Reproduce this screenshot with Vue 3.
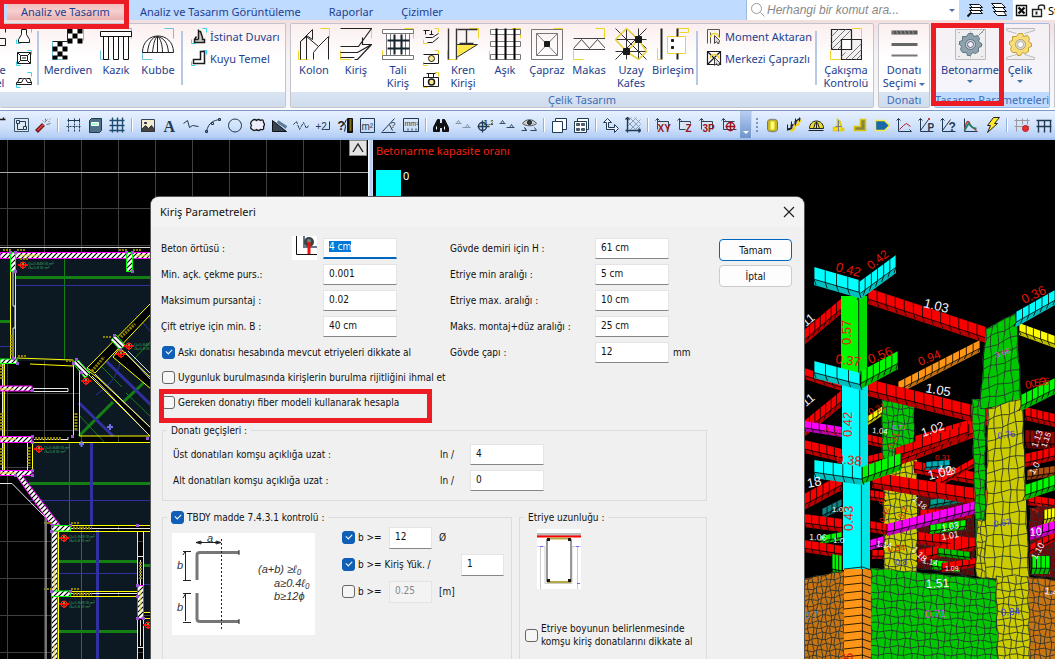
<script setup>
import { h, onMounted } from 'vue'

const K = '#1b1b1b', Y = '#f0d428', C = '#35d5ec', N = '#1f3a52', R = '#c01818'
const cy = ['M0 11V15H4M11 0H15V4', C]
const ye = ['M0 11V15H4M11 0H15V4', Y]
const cyB = ['M0 22V31H10M22 0H31V10', '#6cc4dc']
const yeB = ['M0 22V31H10M22 0H31V10', Y]

/* Each entry is [path, stroke, fill, strokeWidth] or { t, x, y, s, c } for lettering */
const ICONS = {
  cut: [['M-8 10H5V17H-8M5 0V4', K]],
  foot: [cy, ['M5 1H10V6L13 11V14H2V11L5 6Z', K, '#fff']],
  pad: [cy, ['M1 2H14V13H1ZM4 5H11V10H4ZM1 2L4 5M14 2L11 5M1 13L4 10M14 13L11 10M5.500 7.500H9.500', K]],
  tie: [cy, ['M0 10H5L7 6H9L11 10H15V12H0ZM2 6H6M10 6H14M3 6L1 10M13 6L15 10', K]],
  stairs: [['M0 13V31H10M20 0H31V12', '#6cc4dc'], ['M0.500 13.500H15.500V0.500H30.500V14.500H25.500L14.500 25.500V30.500H0.500Z', 'none', '#fff'], ['M15 0H20V5H15ZM25 0H30V5H25ZM20 5H25V10H20ZM15 10H20V15H15ZM25 10H30V15H25ZM5 13H10V18H5ZM0 18H5V23H0ZM10 18H15V23H10ZM5 23H10V28H5ZM0 27H5V31H0ZM10 27H15V31H10Z', 'none', '#000'], ['M0 13H15M15 13V0', '#222']],
  piles: [cyB, ['M0 3H31V8H0ZM3 8H8V31H3ZM13 8H18V31H13ZM23 8H28V31H23Z', '#111', '#fff', 1]],
  dome: [cyB, ['M0 24C0 2 31 2 31 24ZM5 24C6 14 9 9 15 8M10 24C11 16 12 10 15 8V24M20 24C20 16 18 10 15 8M26 24C25 14 22 10 15 8', '#222', '#fff']],
  wall: [cy, ['M7 1V11M7 3H9L11 9V11H13V14H3V11H7M5 8L3 11', K, '#ccc', 1.5]],
  well: [cy, ['M9 1H13V13H2V9H9Z', K, '#fff', 1.5]],
  column: [yeB, ['M2 31V13L14 1V11L8 7V31M2 13L8 8L20 18L30 8V31M20 18L15 24V31', '#222', 'none', 1]],
  beam: [yeB, ['M0 0H31L18 18H0M0 24H17L31 16H22V9M31 16L17 31H14M0 29H14', '#222', 'none', 1.2]],
  sub: [yeB, ['M0 1H31V5H0ZM0 27H31V31H0ZM4 5H8V27H4ZM23 5H27V27H23Z', '#777', '#fff'], ['M12 6V26M19 6V26M5 12H27M5 20H27', '#13242e', 'none', 2]],
  s1: [ye, ['M0 2H6M2 2V6M6 6H10M8 2V6M15 5L9 9H2M15 9L9 14H4', K]],
  s2: [ye, ['M0 4H15V13H0', K], ['M5 8A3 3 0 1 0 11 8A3 3 0 1 0 5 8', K, '#fbe98c']],
  s3: [ye, ['M0 5H15V14H0ZM3 1H12M5 1V5M10 1V5', K], ['M5 9.500A3 3 0 1 0 11 9.500A3 3 0 1 0 5 9.500', K, '#fbe98c', 1.5]],
  crane: [yeB, ['M1 0V31M9 0V31M10 1H30M19 1V15M12 15H26', '#333', 'none', 1.4], ['M9 16H30L9 29Z', '#333', '#ffe94d']],
  purlin: [yeB, ['M1 1H31V6H1ZM1 13H31V18H1ZM1 26H31V31H1Z', '#777', '#fff'], ['M7 0V31M16 0V31M25 0V31', '#000', 'none', 2]],
  brace: [yeB, ['M0 1H31V31H0ZM5 5H26V27H5ZM5 5L26 27M26 5L5 27', '#777'], ['M13 13H18V18H13Z', K, K]],
  truss: [yeB, ['M0 10H32M0 21H32M0 20L8 11L16 20L24 11L32 20', '#444', 'none', 1]],
  space: [['M11 0L31 20M31 0L0 31M0 0L31 31M11 0V31M23 0V31M0 11H31M0 23H31', '#333'], ['M0 11L11 0L23 11L11 23ZM23 11L31 23L23 31L11 23', '#e8d240', 'none', 1.6], ['M20 8H26V14H20ZM8 20H14V26H8Z', K, K]],
  joint: [['M4 0V31', '#222', 'none', 2], ['M0 20V31H3M20 31V24M22 4H31V0H20', Y, 'none', 1], ['M10 8H28V25H10Z', Y, '#fff'], ['M14 11H16V13H14ZM14 18H16V20H14Z', K, K], ['M20 0V8M20 25V31', '#222', 'none', 2]],
  moment: [['M1 15V1H13V9M4 15V4', '#555'], ['M4 9A4 4 0 0 1 12 9', Y, 'none', 1.6], ['M8 7V15L10 13L12 16L13 12Z', '#444', '#ddd']],
  central: [['M1 1H14V14H1ZM1 1L14 14M14 1L1 14', K, '#fff', 1.2], ['M4 8A4 4 0 0 1 12 8', Y, 'none', 1.6], ['M8 7V15L10 13L12 16L13 12Z', '#444', '#ddd']],
  clash: [yeB, ['M1 1H21V21H1ZM11 11H31V31H11Z', '#222', '#f2f0f0', 1.2], ['M1 8L8 1M1 15L15 1M1 21L21 1M7 21L11 17M15 31L31 15M11 28L15 24M21 31L31 21M11 21L16 16M26 31L31 26', '#777'], ['M11 11H21V21H11Z', '#222', '#fff', 1.2]],
  rebar: [['M3 4H29', '#555', 'none', 4], ['M3 16H29', '#666', 'none', 3], ['M3 27H29', '#777', 'none', 2], ['M4 2L5 6M8 2L9 6M12 2L13 6M16 2L17 6M20 2L21 6M24 2L25 6', '#999']],
  gear: [['M1 1H31V31H1Z', '#bbb', '#eee'], ['M4 4H5M27 4H28M4 28H5M27 28H28M4 16H5M27 16H28M16 4V3M16 28V29M24 7L30 1', '#888'], ['M14 5H18L19 8L23 7L25 10L24 13L27 15V18L24 19L24 23L21 25L18 24L16 27H13L12 24L8 24L6 21L7 18L5 16V13L8 12L8 8L12 8Z', '#5f7480', '#8ea2ad'], ['M11 16A5 5 0 1 0 21 16A5 5 0 1 0 11 16', '#5f7480', '#c9d2d8'], ['M13 16A3 3 0 1 0 19 16A3 3 0 1 0 13 16', '#667', '#eef']],
  gearY: [['M2 0H30V2L20 5M2 2L12 5M2 0V2M2 31H30V29L20 26M2 29L12 26M2 31V29', '#bbb', '#eee'], ['M14 5H18L19 8L23 7L25 10L24 13L27 15V18L24 19L24 23L21 25L18 24L16 27H13L12 24L8 24L6 21L7 18L5 16V13L8 12L8 8L12 8Z', '#c0a030', '#f8dc78'], ['M11 16A5 5 0 1 0 21 16A5 5 0 1 0 11 16', '#b0a070', '#e4e0d0'], ['M13 16A3 3 0 1 0 19 16A3 3 0 1 0 13 16', '#aaa', '#fff']],

  edge: [['M8 2H14M12 2V0', K, 'none', 1.5]],
  frame: [['M1 1H15V14H1Z', '#3c5468', '#dce8f4'], ['M3 3H6V6H3ZM10 9H13V12H10ZM4 6V12H10M6 4H12V9', N]],
  wand: [['M1 14L8 7', '#7a1010', 'none', 4], ['M2 13L8 7', '#e05050', 'none', 1.5], ['M9 5L12 2M11 7L15 6M10 1V3M14 2L15 1M13 4H14M7 3L8 4', '#777']],
  dim: [['M2 3H14M3 1V5M9 1V5M14 1V5', N], ['M1 9H15M3 6V15M9 6V15M14 6V15', N, 'none', 1, '2 1']],
  book: [['M2 3L4 1H14V13L12 15H2Z', N, '#4f7288'], ['M4 5H11V8H4Z', '#fff', '#9fc']],
  grid: [['M0 3H15M0 8H15M0 13H15M3 0V15M8 0V15M13 0V15', '#1f4c70', 'none', 1.4]],
  image: [['M2 2H15V14H2Z', '#345', '#f4ecd0'], ['M2 12L6 8L9 11L12 8L15 12V14H2Z', '#333', '#444'], ['M5 5H7V6H5Z', '#234', '#234']],
  letter: [{ t: 'A', x: 2, y: 14, s: 16, c: N, f: 'Liberation Serif', b: 1 }],
  poly: [['M0 6L4 3L6 10L9 8L15 9', N]],
  arc: [['M1 14C3 5 8 3 14 2M0 13H2V15H0ZM6 5H8V7H6ZM13 1H15V3H13Z', N]],
  circle: [['M1 8A6.500 6.500 0 1 0 14 8A6.500 6.500 0 1 0 1 8', N]],
  cloud: [['M3 3Q5 1 7 3Q9 1 11 3Q14 1 14 5Q16 7 14 9Q15 13 11 12Q9 14 7 12Q4 14 3 12Q0 11 2 8Q0 5 3 3Z', K, '#eef', 1.3]],
  wedge: [['M1 3L15 14H1Z', '#111', '#345'], ['M6 4L15 10', '#5b7c94', 'none', 3]],
  zigzag: [['M0 7L3 4L6 12L10 5L13 11L15 8', N, 'none', 1, '3 1']],
  elev: [{ t: '+2', x: 0, y: 12, s: 10, c: N }, ['M10 12H14V4', N]],
  query: [{ t: '?', x: 0, y: 12, s: 12, c: K, b: 1 }, ['M9 2L7 6L8 9L7 14', K], ['M10 1H15V15H10Z', '#111', '#111'], ['M13 2V14', Y, 'none', 2, '1 1']],
  area: [['M1 1H15V15H1Z', N], { t: 'm²', x: 2, y: 12, s: 10, c: N }],
  angle: [['M0 15H14M1 14L13 1M8 7L11 13', N], { t: '?', x: 9, y: 10, s: 9, c: N }],
  mm: [['M0 1H15V14H0Z', N], { t: 'mm²', x: 1, y: 8, s: 7, c: N }, ['M4 12H5M8 12H9M12 12H13', N, 'none', 2]],
  find: [['M4 2H6V6H9V2H11L15 10V14H9V10H6V14H0V10Z', '#111', '#111'], ['M3 9V12M11 9V12', '#fff']],
  lv1: [['M0 6H6M3 3L5 6H1ZM7 10H15M12 7L14 10H10Z', '#8496a6']],
  axis: [['M1 9A4 4 0 1 0 9 9A4 4 0 1 0 1 9M5 3V15M0 9H12', N, 'none', 1.4], { t: '1.2', x: 6, y: 7, s: 8, c: N, b: 1 }],
  lv2: [['M0 6H6M3 3L5 6H1ZM7 10H15M12 7L14 10H10Z', '#334f66']],
  eye: [['M1 6C4 1 12 1 15 6C12 9 4 9 1 6Z', '#555', '#ccc'], ['M6 5A2 2 0 1 0 10 5A2 2 0 1 0 6 5', '#111', '#345'], ['M0 13H5M3 10L5 13ZM9 13H15M13 10L15 13', '#345']],
  copy: [['M4 1H15V12H4Z', N, '#fff'], ['M1 4H11V15H1Z', N, '#fff']],
  tiles: [['M4 1H15V12H4Z', N, '#fff'], ['M1 4H13V15H1Z', N, '#fff'], ['M3 6H6V8H3ZM8 6H11V8H8ZM3 11H6V13H3ZM8 11H11V13H8Z', '#456', '#567']],
  move: [['M4 1L8 5H5V10H11V7L15 11L11 15V12H3V5H0Z', N, '#eef']],
  hatch: [['M2 4L6 0M2 9L11 0M5 12L15 2M10 12L15 7M4 0L15 11M9 0L15 6M2 4L10 12', '#8aa0b4'], ['M2 0V15M0 13H15M0 2L2 0L4 2M13 11L15 13L13 15', N, 'none', 1.4]],
  xy: [['M2 1V12M0 3L2 1L4 3M2 4H13V12', '#345', '#d8e4f0'], { t: 'XY', x: 2, y: 14, s: 10, c: '#9c1420', b: 1 }],
  z: [['M2 1V12H8M0 3L2 1L4 3M2 4H13V6', '#345', '#d8e4f0'], { t: 'Z', x: 8, y: 14, s: 10, c: '#9c1420', b: 1 }],
  p3: [['M2 1V12M0 3L2 1L4 3M2 4H13V12', '#345', '#d8e4f0'], { t: '3P', x: 3, y: 14, s: 10, c: '#9c1420', b: 1 }],
  orbit: [['M2 1V12H15M0 3L2 1L4 3M2 4H13', '#345'], ['M5 9A4 4 0 1 0 13 9A4 4 0 1 0 5 9M9 4V14M4 9H14', '#9c1420', 'none', 1.4]],
  cyl: [['M3 4C3 1 13 1 13 4V12C13 15 3 15 3 12Z', '#777', '#c8b820'], ['M6 4H10V12H6Z', 'none', '#ffff70']],
  ladder: [['M1 12L5 11V8L9 7V4L14 1', '#222', 'none', 2], ['M4 14L8 11V8L12 7V4L15 3', Y, 'none', 2.4], ['M1 7V13M5 4V10M9 1V8M13 0V4', '#222']],
  dome2: [['M1 11C1 1 15 1 15 11Z', '#222', '#e8dc30'], ['M5 11L7 5M8 11V4M11 11L9 5M0 13H15', '#222']],
  stand: [['M7 1V11M7 3H9L11 9V11H13V13H3V10H7', '#e0cc00', '#ffe640', 1.6], ['M8 3V14M5 9H11', '#777']],
  boot: [['M8 2H13V13H2V9H8Z', '#d8c810', '#8a8440', 1.6]],
  tag: [['M1 3H10L15 8L10 13H1Z', '#fbe840', '#1769a8', 1.4]],
  chart1: [['M2 1V14H15M0 3L2 1L4 3M13 12L15 14', N], ['M3 12L7 8L10 6L14 9', R]],
  chart2: [['M2 1V14H15M0 3L2 1L4 3M2 13L10 2', N], ['M10 1H11V2H10Z', R, R], { t: 'P', x: 9, y: 13, s: 10, c: N, b: 1 }],
  chart3: [['M2 1V14H15M0 3L2 1L4 3M2 13L10 2', N], { t: '?', x: 8, y: 13, s: 12, c: N, b: 1 }],
  spectrum: [['M2 1V14H15', N], ['M2 13C4 2 6 2 8 8L14 13', '#c03030', 'none', 1.5], ['M2 13L6 6L10 10L14 11', '#1c8a70', 'none', 1.8]],
  bolt: [['M9 0H15L10 6H13L3 15L6 8H3Z', '#222', '#ffe828']],
  frameR: [['M0 3H15M0 9H15M2 1V14M8 1V7M13 1V7', '#999'], ['M8 11A3 3 0 1 0 14 11A3 3 0 1 0 8 11', R, '#e03030']],
  frameB: [['M0 3H15M0 9H15M2 3V15M8 3V15M14 3V15', N, 'none', 1.4]],

  layersUp: [['M2 8L5 11H15L12 8ZM2 5L5 8H15L12 5ZM2 2L5 5H15L12 2Z', '#111', '#fff', 1], ['M0 14L4 10', '#111', 'none', 2]],
  layersDn: [['M2 9L6 13H15L12 9ZM1 5L5 9H15L11 5ZM0 1L4 5H14L10 1Z', '#111', '#fff', 1]],
  xbox: [['M1 2H11V12H1Z', '#111', '#fff', 1.4], ['M3 4L9 10M9 4L3 10', '#111', 'none', 2.4]],
  lock: [['M1 6H10V13H1ZM7 6V3C7 1 13 1 13 3V6', '#222', '#fff', 1.4], ['M5 8V11', '#222', 'none', 2]],
  lens: [['M2 6A5 5 0 1 0 12 6A5 5 0 1 0 2 6M11 10L15 14', '#9a9a9a']],
}

const Glyph = (p) =>
  h('svg', { class: 'glyph', width: p.size, height: p.size, viewBox: `-0.5 -0.5 ${p.size} ${p.size}`, 'aria-hidden': 'true' },
    ICONS[p.name].map((s) =>
      Array.isArray(s)
        ? h('path', { d: s[0], stroke: s[1] || 'none', fill: s[2] || 'none', 'stroke-width': s[3] || 1, 'stroke-dasharray': s[4] })
        : h('text', { x: s.x, y: s.y, 'font-size': s.s, fill: s.c, 'font-weight': s.b ? 700 : 400, 'font-family': (s.f || 'Liberation Sans') + ', sans-serif' }, s.t)))
Glyph.props = ['name', 'size']

const tabs = ['Analiz ve Tasarım', 'Analiz ve Tasarım Görüntüleme', 'Raporlar', 'Çizimler']
const steelA = [['column', 'Kolon'], ['beam', 'Kiriş'], ['sub', 'Tali Kiriş']]
const steelB = [['crane', 'Kren Kirişi'], ['purlin', 'Aşık'], ['brace', 'Çapraz'], ['truss', 'Makas'], ['space', 'Uzay Kafes'], ['joint', 'Birleşim']]
const tools = 'edge frame wand | dim book grid | image letter poly arc circle cloud wedge zigzag elev query area angle mm | find lv1 axis lv2 eye | copy tiles | move hatch | xy z p3 orbit'.split(' ')
const tools2 = 'cyl ladder dome2 stand boot tag chart1 chart2 chart3 spectrum bolt | frameR frameB'.split(' ')

const leftFields = [['cover', 'Beton örtüsü :', '4 cm'], ['pull', 'Min. açk. çekme purs.:', '0.001'], ['maxp', 'Maksimum pursantaj :', '0.02'], ['minb', 'Çift etriye için min. B :', '40 cm']]
const rightFields = [['webh', 'Gövde demiri için H :', '61 cm'], ['smin', 'Etriye min aralığı :', '5 cm'], ['smax', 'Etriye max. aralığı :', '10 cm'], ['mont', 'Maks. montaj+düz aralığı :', '25 cm'], ['webd', 'Gövde çapı :', '12', 'mm']]
const checks = [['Askı donatısı hesabında mevcut etriyeleri dikkate al', true], ['Uygunluk burulmasında kirişlerin burulma rijitliğini ihmal et', false], ['Gereken donatıyı fiber modeli kullanarak hesapla', false]]

/* ---------- plan view ---------- */
const vGrid = Array.from({ length: 10 }, (_, i) => 7.5 + i * 37)
const hGrid = Array.from({ length: 13 }, (_, i) => 208.5 + i * 37)
const marks = [[23, 265], [129, 346], [39, 449], [64, 538], [64, 604], [148, 625], [121, 354], [86, 381]]
const nodes = [[10, 252], [15, 252], [15, 271], [126, 252], [132, 252], [132, 271], [13, 358], [17, 363], [73, 363], [76, 359], [32, 390], [81, 372], [114, 335], [120, 349], [32, 436], [32, 442], [32, 470], [32, 475], [15, 475], [52, 525], [70, 525], [51, 531], [137, 525], [70, 591], [51, 591], [137, 585], [137, 596], [137, 618], [143, 618], [147, 438], [72, 436]]
const blurs = [[3, 250], [17, 250], [119, 250], [133, 250], [20, 259], [18, 356], [66, 361], [103, 337], [44, 523], [71, 523], [44, 589], [71, 589]]

/* ---------- 3D view ---------- */
const P = (a) => a.map((p) => p.map((v) => Math.round(v * 10) / 10).join(',')).join(' ')
const mix = (a, b, t) => [a[0] + (b[0] - a[0]) * t, a[1] + (b[1] - a[1]) * t]
function beam(x1, y1, x2, y2, d, n, c) {
  let lines = ''
  const lean = y2 > y1 ? 2 : -2
  for (let i = 0; i <= n; i++) {
    const [x, y] = mix([x1, y1], [x2, y2], i / n)
    lines += `M${x} ${y}V${y + d * 0.68}L${x + lean} ${y + d}`
  }
  lines += `M${x1} ${y1 + d * 0.68}L${x2} ${y2 + d * 0.68}`
  return { c, pts: P([[x1, y1], [x2, y2], [x2, y2 + d], [x1, y1 + d]]), shade: P([[x1, y1 + d * 0.68], [x2, y2 + d * 0.68], [x2, y2 + d], [x1, y1 + d]]), lines, o: 0.25, s: 'rgba(0,0,0,.8)' }
}
function mesh(a, b, c2, d, nx, ny, c) {
  let lines = ''
  const wob = (i, j) => Math.sin(i * 2.3 + j * 1.7) * 1.2
  for (let i = 0; i <= nx; i++) for (let j = 0; j < ny; j++) {
    const p = mix(mix(a, b, i / nx), mix(d, c2, i / nx), j / ny), q = mix(mix(a, b, i / nx), mix(d, c2, i / nx), (j + 1) / ny)
    lines += `M${p[0] + wob(i, j)} ${p[1]}L${q[0] + wob(i, j + 1)} ${q[1]}`
  }
  for (let j = 0; j <= ny; j++) for (let i = 0; i < nx; i++) {
    const p = mix(mix(a, d, j / ny), mix(b, c2, j / ny), i / nx), q = mix(mix(a, d, j / ny), mix(b, c2, j / ny), (i + 1) / nx)
    lines += `M${p[0]} ${p[1] + wob(j, i)}L${q[0]} ${q[1] + wob(j, i + 1)}`
  }
  return { c, pts: P([a, b, c2, d]), shade: '', lines, o: 0, s: 'rgba(40,50,50,.85)' }
}
function column(x1, x2, y1, y2, c, n = 0) {
  const m = x1 + (x2 - x1) * 0.68
  let lines = `M${m} ${y1}V${y2}`
  for (let i = 0; i < n; i++) lines += `M${x1} ${y1 + i * 8}L${m} ${y1 + i * 8 - 2}L${x2} ${y1 + i * 8 + 1}`
  return { c, pts: P([[x1, y1], [x2, y1], [x2, y2], [x1, y2]]), shade: P([[m, y1], [x2, y1], [x2, y2], [m, y2]]), lines, o: 0.1, s: 'rgba(0,0,0,.8)' }
}
const RD = '#f80000', CY = '#00ffff', GR = '#00f800', DG = '#00c800', YE = '#cccc00', MG = '#ff00ff', OR = '#ff9618', BR = '#c87410', YB = '#ffff00'
const solids = [
  beam(804, 330, 842, 298, 15, 7, RD), beam(804, 368, 842, 380, 11, 4, RD), beam(804, 421, 842, 390, 16, 7, RD),
  beam(804, 421, 842, 427, 10, 5, MG), beam(804, 440, 842, 449, 13, 5, RD), beam(804, 494, 842, 474, 16, 6, RD),
  beam(822, 509, 842, 499, 10, 4, '#108080'), beam(804, 514, 842, 519, 13, 5, RD), beam(820, 536, 842, 532, 8, 4, GR), beam(804, 540, 842, 546, 12, 5, RD),
  beam(832, 554, 842, 556, 22, 3, GR),
  beam(866, 434, 884, 438, 10, 3, RD), beam(868, 416, 883, 406, 9, 3, YB), beam(868, 456, 884, 452, 10, 3, RD),
  mesh([882, 400], [914, 402], [914, 560], [884, 560], 6, 22, DG),
  mesh([884, 460], [917, 460], [917, 574], [884, 572], 6, 17, YE),
  mesh([918, 487], [974, 487], [974, 576], [918, 568], 9, 14, '#5a0a08'),
  beam(915, 436, 975, 418, 9, 8, RD), beam(914, 461, 974, 472, 12, 7, RD), beam(926, 462, 950, 460, 8, 4, '#00aeb8'), beam(935, 480, 974, 458, 9, 6, RD),
  beam(930, 500, 974, 492, 8, 6, '#00a090'), beam(918, 532, 976, 538, 12, 8, RD), beam(930, 525, 966, 520, 9, 6, GR), beam(918, 550, 976, 538, 12, 8, RD),
  beam(932, 560, 960, 563, 9, 5, GR), beam(942, 563, 976, 558, 9, 5, RD), beam(920, 510, 974, 508, 10, 7, RD), beam(938, 548, 970, 552, 8, 5, DG),
  beam(870, 490, 884, 492, 10, 3, RD), beam(870, 521, 888, 524, 11, 3, RD), beam(870, 540, 884, 536, 10, 2, MG), beam(872, 550, 884, 550, 9, 2, RD),
  beam(898, 382, 980, 340, 12, 12, OR),
  beam(868, 288, 986, 327, 16, 13, RD),
  beam(900, 450, 986, 418, 15, 10, RD),
  beam(868, 379, 989, 409, 17, 13, RD),
  beam(895, 448, 968, 424, 12, 8, RD), beam(872, 472, 992, 491, 16, 13, RD),
  beam(887, 524, 985, 499, 12, 13, MG),
  mesh([972, 399], [985, 399], [985, 576], [977, 576], 2, 22, DG),
  mesh([977, 520], [986, 520], [986, 579], [976, 576], 2, 8, YE),
  mesh([986, 329], [1016, 313], [1021, 402], [980, 409], 5, 8, DG),
  beam(1019, 323, 1055, 336, 12, 5, YB), beam(1025, 407, 1055, 414, 13, 5, RD), beam(1025, 430, 1055, 432, 18, 6, '#8c0606'),
  beam(1025, 454, 1055, 447, 13, 5, RD), beam(1027, 470, 1055, 466, 10, 5, '#b05010'), beam(1028, 495, 1055, 499, 10, 4, RD),
  mesh([1030, 508], [1055, 506], [1055, 578], [1030, 575], 6, 10, '#6e0a0a'), beam(1044, 510, 1055, 508, 14, 3, YB),
  beam(1030, 545, 1055, 532, 9, 4, RD), beam(1032, 556, 1050, 556, 18, 4, GR),
  mesh([988, 409], [1022, 398], [1029, 580], [985, 578], 5, 16, YE),
  beam(1030, 528, 1055, 521, 12, 4, MG), beam(1025, 485, 1055, 475, 15, 5, GR), beam(1021, 395, 1055, 378, 16, 6, GR), beam(1016, 312, 1055, 290, 15, 6, CY),
  mesh([804, 579], [844, 571], [844, 662], [804, 662], 9, 15, BR),
  mesh([871, 568], [996, 580], [998, 662], [871, 662], 19, 12, DG),
  mesh([1027, 577], [1056, 580], [1056, 662], [1030, 662], 5, 13, BR),
  mesh([996, 576], [1028, 576], [1030, 662], [998, 662], 5, 12, YE),
  column(841, 867, 296, 375, GR), column(842, 868, 385, 480, CY), column(843, 870, 478, 570, CY), column(844, 871, 569, 662, OR, 12),
  beam(859, 282, 896, 255, 18, 6, CY), beam(814, 267, 859, 280, 18, 4, CY),
  beam(861, 371, 898, 351, 18, 6, GR), beam(814, 361, 860, 373, 17, 4, CY),
  beam(862, 467, 901, 453, 17, 6, GR), beam(814, 460, 862, 467, 18, 5, CY),
]
const labels = [
  ['0.42', 835, 271, 14, 'r', 13], ['0.42', 871, 270, -38, 'r', 12], ['1.03', 923, 307, 14, 'w', 13], ['0.36', 1024, 304, -25, 'r', 13], ['11', 806, 327, -40, 'w', 12],
  ['0.57', 851, 345, -90, 'r', 13], ['0.37', 835, 363, 8, 'r', 13], ['0.56', 870, 364, -22, 'r', 13], ['0.94', 920, 366, -22, 'r', 12], ['1.05', 925, 392, 10, 'w', 13],
  ['11', 806, 407, -40, 'w', 12], ['0.42', 852, 437, -90, 'r', 13], ['1.02', 923, 437, -20, 'w', 12], ['0.31', 870, 415, -22, 'r', 9], ['1.04', 872, 433, 5, 'w', 8],
  ['0.38', 836, 463, 6, 'r', 13], ['1.02', 929, 480, -14, 'w', 13], ['18', 808, 488, -12, 'w', 13], ['0.43', 853, 531, -90, 'r', 13], ['1.06', 809, 540, 2, 'w', 9],
  ['1.51', 926, 588, -3, 'w', 12], ['0.71', 925, 618, -3, 'm', 11], ['0.84', 1001, 616, -5, 'b', 10], ['0.67', 994, 527, -8, 'b', 9], ['0.76', 998, 439, -8, 'b', 9],
  ['3.66', 996, 358, -20, 'm', 8], ['0.71', 892, 430, 0, 'm', 7], ['0.53', 1026, 389, -12, 'r', 11], ['0.56', 1031, 387, -8, 'r', 10], ['1.13', 1037, 448, -70, 'w', 9],
  ['10', 1030, 536, -4, 'w', 11], ['1.0', 1034, 475, -60, 'w', 9], ['1.03', 942, 531, -10, 'w', 9], ['1.01', 942, 540, -10, 'w', 9], ['0.34', 888, 552, -5, 'r', 9], ['0.8', 895, 565, 0, 'b', 9],
  ['1.18', 912, 500, 40, 'w', 8], ['0.31', 935, 460, 0, 'r', 8], ['1.4', 1044, 594, 8, 'w', 10], ['0.7', 805, 619, -4, 'l', 10], ['1.10', 1036, 560, -60, 'w', 9], ['0.15', 853, 678, -90, 'r', 13],
  ['1.14', 876, 546, 10, 'w', 8], ['1.18', 911, 550, 45, 'w', 9], ['0.42', 884, 523, -70, 'r', 8], ['0.7', 903, 520, -60, 'r', 9], ['1.14', 922, 563, 10, 'w', 8], ['1.09', 945, 571, 0, 'w', 7], ['0.20', 824, 433, 10, 'r', 9], ['1.03', 1036, 514, -60, 'r', 9], ['0.31', 893, 450, -70, 'r', 9],
  ['1.0', 832, 512, 0, 'w', 8], ['1.0', 833, 543, 0, 'w', 8], ['1.08', 938, 471, 10, 'w', 9], ['0.4', 884, 505, -80, 'r', 8], ['1.15', 1046, 448, -70, 'w', 8],
]
const tint = { r: '#e01808', w: '#f4f4ff', m: '#e850e8', b: '#3838f0', l: '#4a90d8' }

onMounted(() => {
  const el = document.getElementById('cover')
  if (el) { el.focus(); el.select() }
})
</script>

<template>
  <div class="app">
    <header class="tabbar">
      <nav class="tabs">
        <button v-for="(t, i) in tabs" :key="t" class="tab" :class="{ active: i === 0 }">{{ t }}</button>
      </nav>
      <div class="search">
        <Glyph name="lens" :size="16" />
        <input type="search" aria-label="Komut ara" placeholder="Herhangi bir komut ara..." />
        <i class="drop"></i>
      </div>
      <div class="layers"><button aria-label="Katman yukarı"><Glyph name="layersUp" :size="16" /></button><button aria-label="Katman aşağı"><Glyph name="layersDn" :size="16" /></button></div>
      <div class="state"><Glyph name="xbox" :size="14" /><Glyph name="lock" :size="15" /><span>St</span></div>
    </header>

    <section class="ribbon">
      <div class="group g1">
        <div class="items">
          <button class="big clipped"><Glyph name="cut" :size="32" /><span>ve<br />el</span></button>
          <div class="stack"><button v-for="n in ['foot', 'pad', 'tie']" :key="n" :aria-label="n"><Glyph :name="n" :size="16" /></button></div>
          <i class="sep"></i>
          <button class="big wide"><Glyph name="stairs" :size="32" /><span>Merdiven</span></button>
          <button class="big"><Glyph name="piles" :size="32" /><span>Kazık</span></button>
          <button class="big"><Glyph name="dome" :size="32" /><span>Kubbe</span></button>
          <i class="sep"></i>
          <div class="list">
            <button><Glyph name="wall" :size="16" />İstinat Duvarı</button>
            <button><Glyph name="well" :size="16" />Kuyu Temel</button>
          </div>
        </div>
        <div class="caption"></div>
      </div>
      <div class="group g2">
        <div class="items">
          <button v-for="b in steelA" :key="b[0]" class="big"><Glyph :name="b[0]" :size="32" /><span>{{ b[1] }}</span></button>
          <div class="stack"><button v-for="n in ['s1', 's2', 's3']" :key="n" :aria-label="n"><Glyph :name="n" :size="16" /></button></div>
          <button v-for="b in steelB" :key="b[0]" class="big"><Glyph :name="b[0]" :size="32" /><span>{{ b[1] }}</span></button>
          <i class="sep"></i>
          <div class="list">
            <button><Glyph name="moment" :size="16" />Moment Aktaran</button>
            <button><Glyph name="central" :size="16" />Merkezi Çaprazlı</button>
          </div>
          <i class="sep"></i>
          <button class="big wide"><Glyph name="clash" :size="32" /><span>Çakışma Kontrolü</span></button>
        </div>
        <div class="caption">Çelik Tasarım</div>
      </div>
      <div class="group g3">
        <div class="items"><button class="big"><Glyph name="rebar" :size="32" /><span>Donatı Seçimi <i class="drop"></i></span></button></div>
        <div class="caption">Donatı</div>
      </div>
      <div class="group g4">
        <div class="items">
          <button class="big wider"><Glyph name="gear" :size="32" /><span>Betonarme</span><i class="drop"></i></button>
          <button class="big narrow"><Glyph name="gearY" :size="32" /><span>Çelik</span><i class="drop"></i></button>
        </div>
        <div class="caption blue">Tasarım Parametreleri</div>
      </div>
      <div class="group g5"><div class="items"></div><div class="caption"></div></div>
    </section>

    <section class="toolbar">
      <div class="strip first">
        <template v-for="(n, i) in tools" :key="i">
          <i v-if="n === '|'" class="tsep"></i>
          <button v-else :aria-label="n"><Glyph :name="n" :size="16" /></button>
        </template>
      </div>
      <button class="overflow" aria-label="Diğer düğmeler"><i class="drop"></i></button>
      <div class="strip second">
        <i class="grip"></i>
        <template v-for="(n, i) in tools2" :key="i">
          <i v-if="n === '|'" class="tsep"></i>
          <button v-else :aria-label="n"><Glyph :name="n" :size="16" /></button>
        </template>
      </div>
    </section>

    <main class="work">
      <div class="plan">
        <svg class="scene" aria-label="Kat planı">
          <defs>
            <pattern id="hatch" width="5" height="5" patternUnits="userSpaceOnUse"><path d="M0 0H5V5H0Z" fill="#fff" /><path d="M-1 6L6 -1M-1 1L1 -1M4 6L6 4" stroke="#000" stroke-width="1.200" /></pattern>
            <pattern id="hatchBack" width="5" height="5" patternUnits="userSpaceOnUse"><path d="M0 0H5V5H0Z" fill="#fff" /><path d="M-1 -1L6 6M4 -1L6 1M-1 4L1 6" stroke="#000" stroke-width="1.200" /></pattern>
          </defs>
          <g transform="translate(0 -140)">
            <path v-for="x in vGrid" :key="'v' + x" :d="`M${x} 140V660`" stroke="#404040" />
            <path v-for="y in hGrid" :key="'h' + y" :d="`M0 ${y}H368`" stroke="#404040" />
            <path d="M0 172.500H368" stroke="#aaa" />
            <path d="M0 247.500H151" stroke="#ddd" />
            <path d="M0 258H151V436H79V361H0ZM33 443H151V525H58L19 475H33ZM58 532H137V591H58ZM58 597H137V660H58ZM144 532H151V612H144ZM144 620H151V660H144Z" fill="#0c1923" />
            <path d="M0 364H73V436H0Z" fill="#000" />
            <path d="M7.500 364V436M44.500 364V436M0 393.500H73M0 430.500H73" stroke="#404040" />
            <path d="M16 277.500H151M0 321.500H10M29 483.500H151M58 561.500H137M58 631.500H137M144 565.500H151M79 436L113 402M120 405L151 376" stroke="#148014" stroke-width="3" />
            <path d="M64.500 258V359M69.500 443V525M81.500 532V660M96 361L122 387M79 415L105 443M126 393L151 417M134 359L151 341" stroke="#148014" />
            <path d="M16 285.500H151M0 346.500H10M28 500.500H151M58 573.500H137M144 584.500H151M136 315L151 332M96 395Q120 380 121 355M79 403L84 408" stroke="#3030a0" fill="none" />
            <path d="M91.500 443V525M97.500 530V660M101 356L151 405M79 403L113 436" stroke="#3030a0" stroke-width="3" />
            <path d="M87 368L151 303L151 314L95 373Z" fill="#000" stroke="#ff0" />
            <path d="M120 348L151 378V389L113 357ZM75 361L151 437L151 428L98 378Z" fill="#000" stroke="#ff0" />
            <path d="M125 352L151 380M128 351L151 374M92 376L148 434M95 374L151 428" stroke="#ddd" />
            <path d="M10.500 258V360M15.500 258V360M0 364H4V470M4.500 364V470M73.500 363V436M79.500 363V436H151M33 442.500H151M17 358L73 360M30 364L73 366M27.500 443V470M32.500 443V470M58 531.500H151M70 525.500H151M137.500 531V660M143.500 531V660M58 591.500H137M70 596.500H137M144 612.500H151M144 618.500H151M58.500 531V660" stroke="#ff0" fill="none" />
            <path d="M13 270V306H15V328H13V358M33 388.500H68V391.500H33M34 439.500H68V437M0 483.500H12L46 518V660M2.500 364V470M70 528.500H151M70 593.500H137M140.500 560V590M140.500 620V646M138 647.500H144M138 556.500H144" stroke="#e8e8e8" fill="none" />
            <path d="M0 252.500H151V258.500H0ZM0 386H32V391H0ZM0 436.500H32V442.500H0ZM0 470.500H32V475.500H22L60 525H51L16 475.500H0ZM51.500 531H57.500V660H51.500ZM137.500 585.500H143.500V618.500H137.500Z" fill="url(#hatch)" stroke="#f0f" />
            <path d="M10.500 252.500H15.500V271.500H10.500ZM126.500 252.500H132.500V271.500H126.500ZM0 359H17V363.500H0ZM51.500 525.500H70.500V531H51.500ZM51.500 591H70.500V596.500H51.500Z" fill="url(#hatch)" stroke="#0f0" />
            <path d="M73 363L77 359L90 373L85 378ZM111 340L116 335L125 345L120 350Z" fill="url(#hatchBack)" stroke="#0f0" />
            <path d="M20 255.500H40M136 255.500H150M0 389H14M0 439H16M0 473H16M54.500 570V590M54.500 645V659M140.500 590V612" stroke="#e8d840" stroke-width="2" opacity=".6" />
            <g v-for="(b, i) in blurs" :key="'b' + i"><path :d="`M${b[0]} ${b[1]}h9`" stroke="#8c8000" stroke-width="2" stroke-dasharray="2 1" /></g>
            <path d="M73 528H92M73 594H92M35 438.500H62M92 371L104 357M121 337L135 324M12 335V356M1 365V380M1 413V431M29 447V466M76 413V431M1 448V466M140.500 562V580" stroke="#8c8000" stroke-width="3" stroke-dasharray="2 1" />
            <path v-for="(n, i) in nodes" :key="'n' + i" :d="`M${n[0] - 1} ${n[1] - 1}h3v3h-3z`" fill="#9a58d0" />
            <g v-for="(m, i) in marks" :key="'m' + i">
              <path :d="`M${m[0] - 5} ${m[1]}h10M${m[0]} ${m[1] - 3}v7`" stroke="red" stroke-width="2" />
              <circle :cx="m[0]" :cy="m[1]" r="3" fill="none" stroke="#f03020" />
              <circle :cx="m[0]" :cy="m[1] - 1" r="1" fill="#70c040" />
              <template v-if="i < 5"><text :x="m[0] + 5" :y="m[1]" class="tiny">Q=5.848 III m²</text><text :x="m[0] + 5" :y="m[1] + 4" class="tiny">G=5.8 III m²</text></template>
            </g>
            <path d="M107 427h6M110 424v6M79 444h5M81.500 441v6" stroke="#7070e0" stroke-width="2" />
          </g>
        </svg>
        <button class="up" aria-label="Yukarı"><svg width="12" height="10"><path d="M1 9L6 1L11 9" fill="none" stroke="#222" stroke-width="1.400" /></svg></button>
      </div>
      <div class="splitter"></div>
      <div class="model">
        <svg class="scene" aria-label="Üç boyutlu model">
          <g transform="translate(-373 -140)">
            <g v-for="(s, i) in solids" :key="i">
              <polygon :points="s.pts" :fill="s.c" />
              <polygon v-if="s.shade" :points="s.shade" fill="#000" :opacity="s.o" />
              <path :d="s.lines" :stroke="s.s" fill="none" />
            </g>
            <text v-for="(l, i) in labels" :key="'t' + i" class="ratio" :font-size="l[5]" :fill="tint[l[4]]" :transform="`translate(${l[1]} ${l[2]}) rotate(${l[3]})`">{{ l[0] }}</text>
          </g>
        </svg>
        <div class="legend">
          <p>Betonarme kapasite oranı</p>
          <div><i></i><span>0</span></div>
        </div>
      </div>
    </main>

    <section class="dialog" role="dialog" aria-label="Kiriş Parametreleri">
      <header class="title">
        <h1>Kiriş Parametreleri</h1>
        <button aria-label="Kapat"><svg width="12" height="12"><path d="M1 1L11 11M11 1L1 11" stroke="#222" stroke-width="1.200" /></svg></button>
      </header>
      <div class="body">
        <div class="main">
          <div class="top">
            <div class="col left">
              <div v-for="(f, i) in leftFields" :key="f[0]" class="row">
                <label :for="f[0]">{{ f[1] }}</label>
                <svg v-if="i === 0" class="cover" width="25" height="24"><path d="M0 0H25V24H0Z" fill="#fff" /><path d="M4.500 0V18.500H25" stroke="#111" fill="none" /><path d="M12 0V11H25" stroke="#678" stroke-width="2" fill="none" /><circle cx="17" cy="6" r="5" fill="#3c4440" /><circle cx="17" cy="5" r="2" fill="#788" /><path d="M17 6V18" stroke="#f01010" stroke-width="3" /></svg>
                <input :id="f[0]" type="text" :value="f[2]" />
              </div>
            </div>
            <div class="col right">
              <div v-for="f in rightFields" :key="f[0]" class="row">
                <label :for="f[0]">{{ f[1] }}</label>
                <input :id="f[0]" type="text" :value="f[2]" />
                <span v-if="f[3]" class="unit">{{ f[3] }}</span>
              </div>
            </div>
            <div class="checks">
              <label v-for="c in checks" :key="c[0]" class="check"><input type="checkbox" :checked="c[1]" />{{ c[0] }}</label>
            </div>
          </div>

          <fieldset class="span">
            <legend>Donatı geçişleri :</legend>
            <div class="row"><label for="upper">Üst donatıları komşu açıklığa uzat :</label><span>ln /</span><input id="upper" type="text" value="4" /></div>
            <div class="row"><label for="lower">Alt donatıları komşu açıklığa uzat :</label><span>ln /</span><input id="lower" type="text" value="0" /></div>
          </fieldset>

          <div class="pair">
            <fieldset class="code">
              <legend><label class="check"><input type="checkbox" checked />TBDY madde 7.4.3.1 kontrolü :</label></legend>
              <svg class="sketch" width="143" height="102">
                <path d="M0 0H143V102H0Z" fill="#fff" />
                <path d="M25 47V22Q25 19.500 28 19.500H67M25 60V86Q25 88.500 28 88.500H67" fill="none" stroke="#777" stroke-width="3" />
                <path d="M67 17V22M67 86V91M24 9.500H49M24 9.500l5-1.500v3zM49 9.500l-5-1.500v3zM13.500 19V47M11 18.500H19M11 47.500H19M13.500 61V88M11 60.500H19M11 89.500H19M11 22l2.500-4M11 65l2.500-4" fill="none" stroke="#222" />
                <path d="M49.500 6V96" stroke="#222" stroke-dasharray="2 2" />
                <g class="hand"><text x="35" y="9">a</text><text x="5" y="36">b</text><text x="5" y="78">b</text><text x="86" y="40">(a+b) ≥ℓ₀</text><text x="102" y="54">a≥0.4ℓ₀</text><text x="102" y="67">b≥12ϕ</text></g>
              </svg>
              <div class="conds">
                <div class="cond"><label class="check"><input type="checkbox" checked />b &gt;=</label><input type="text" aria-label="Çap katı" value="12" class="small" /><span>Ø</span></div>
                <div class="cond"><label class="check"><input type="checkbox" checked />b &gt;= Kiriş Yük. /</label><input type="text" aria-label="Kiriş yüksekliği böleni" value="1" class="small far" /></div>
                <div class="cond"><label class="check"><input type="checkbox" />b &gt;=</label><input type="text" aria-label="Metre" value="0.25" class="small" disabled /><span>[m]</span></div>
              </div>
            </fieldset>
            <fieldset class="stirrup">
              <legend>Etriye uzunluğu :</legend>
              <svg width="44" height="60"><path d="M0 0H44V60H0Z" fill="#fff" /><path d="M3.500 18V60M40.500 18V60M0 17.500H8V54.500H35V17.500H44" fill="none" stroke="#ccc" /><path d="M0 5.500H44" stroke="#bbb" stroke-width="3" /><path d="M0 7.500H44" stroke="#f00" stroke-width="2" /><path d="M10 10V53M34 10V53" stroke="#999" stroke-width="2" /><path d="M10 9.500H34M10 53H34" stroke="#b0aa40" stroke-width="2" /><path d="M10 9h3v3h-3zM31 9h3v3h-3zM10 50h3v3h-3zM31 50h3v3h-3z" fill="#211" /><path d="M3 17.500h3M39 17.500h3M40 54.500h3" stroke="#66f" /></svg>
              <label class="check tall"><input type="checkbox" /><span>Etriye boyunun belirlenmesinde<br />komşu kiriş donatılarını dikkate al</span></label>
            </fieldset>
          </div>
        </div>
        <div class="actions">
          <button class="ok">Tamam</button>
          <button>İptal</button>
        </div>
      </div>
      <div class="callout c3"></div>
    </section>

    <div class="callout c1"></div>
    <div class="callout c2"></div>
  </div>
</template>

<style>
html, body { margin: 0; background: #000; overflow: hidden; }
</style>

<style scoped>
.app { position: relative; height: 100vh; display: flex; flex-direction: column; overflow: hidden; font: 11px/13px "Noto Sans", sans-serif; color: #1e3f8f; }
button { border: 0; padding: 0; margin: 0; background: none; font: inherit; color: inherit; }
.app :deep(.glyph) { display: block; flex: none; }
.drop { display: inline-block; width: 0; height: 0; border: 3px solid transparent; border-top-color: #4a6ea8; border-bottom: 0; vertical-align: middle; }

.tabbar { flex: none; height: 20px; display: flex; background: #bfdbff; }
.tabs { flex: 1; display: flex; margin-left: 7px; }
.tab { height: 22px; padding: 0 14px; white-space: nowrap; }
.tab.active { margin-right: 2px; background: linear-gradient(#eeb4b4, #f5cfcf 50%, #e9a8a8); border-radius: 0 0 2px 2px; }
.search { flex: none; width: 213px; display: flex; align-items: center; gap: 2px; background: #fff; border-left: 1px solid #9db9dc; box-sizing: border-box; padding: 0 4px 0 2px; }
.search input { flex: 1; min-width: 0; border: 0; padding: 0; background: none; outline: 0; font: italic 12px "Liberation Sans", sans-serif; }
.search input::placeholder { color: #888; }
.layers { width: 54px; display: flex; align-items: center; gap: 8px; padding-left: 8px; box-sizing: border-box; }
.state { width: 42px; display: flex; align-items: center; gap: 2px; background: #fff; color: #000; overflow: hidden; padding-left: 2px; box-sizing: border-box; }

.ribbon { flex: none; height: 90px; display: flex; gap: 4px; padding-top: 3px; box-sizing: border-box; background: linear-gradient(#f3dede, #f6f2f4 40%, #f4f6fa); overflow: hidden; border-bottom: 2px solid #fff; }
.group { flex: none; display: flex; flex-direction: column; box-sizing: border-box; border: 1px solid #c4c4cc; border-radius: 2px; background: linear-gradient(#fbeeee, #fff 40%); }
.g1 { width: 286px; border-left: 0; }
.g2 { width: 584px; }
.g3 { width: 52px; }
.g4 { width: 116px; border-color: #9cbbe6; background: linear-gradient(#f6f0f4, #f4f7fd); }
.g5 { flex: 1; }
.items { flex: 1; display: flex; align-items: flex-start; padding-top: 4px; min-height: 0; }
.g2 .items, .g4 .items { padding-left: 2px; }
.g3 .items { justify-content: center; }
.caption { height: 15px; line-height: 15px; text-align: center; white-space: nowrap; background: linear-gradient(#d9e4f2, #cfdcec); color: #3e6db5; }
.caption.blue { background: #bedaff; }
.big { flex: none; width: 42px; display: flex; flex-direction: column; align-items: center; white-space: normal; }
.big span { margin-top: 3px; }
.big > .drop { margin-top: 4px; }
.wide { width: 54px; }
.g3 .big { width: 48px; }
.wider { width: 66px; }
.narrow { width: 34px; }
.clipped { width: 12px; align-items: flex-start; overflow: hidden; }
.clipped span { margin-left: -6px; }
.stack { width: 23px; display: flex; flex-direction: column; align-items: center; gap: 6px; }
.sep { width: 2px; height: 54px; margin: 3px 2px 0; background: #b5c9e2; flex: none; }
.list { flex: 1; display: flex; flex-direction: column; gap: 6px; padding-left: 6px; white-space: nowrap; }
.list button { display: flex; align-items: center; gap: 3px; height: 16px; }

.toolbar { flex: none; height: 30px; display: flex; background: #c3dafa; border-top: 1px solid #7d99c4; border-bottom: 2px solid #9fc0ee; box-sizing: border-box; overflow: hidden; }
.strip { display: flex; align-items: center; background: linear-gradient(#e6f0ff, #cfe1fb 60%, #b2cdf5); }
.first > button:first-child { margin-left: -12px; }
.second { flex: 1; margin-left: 1px; }
.strip button { width: 22px; height: 22px; display: flex; align-items: center; justify-content: center; flex: none; }
.tsep { width: 2px; height: 14px; margin: 0 3px; background: linear-gradient(90deg, #8fb0e0 50%, #fff 50%); flex: none; }
.overflow { width: 12px; display: flex; align-items: flex-end; justify-content: center; padding-bottom: 4px; background: linear-gradient(#b8cff2, #6f94cc); }
.overflow .drop { border-top-color: #fff; }
.grip { width: 2px; height: 14px; margin: 0 3px 0 4px; background: repeating-linear-gradient(#7796c8 0 2px, transparent 2px 4px); }

.work { flex: 1; display: flex; min-height: 0; background: #000; }
.plan { flex: none; width: 368px; position: relative; }
.scene { display: block; width: 100%; height: 100%; }
.up { position: absolute; right: 1px; top: 0; width: 18px; height: 16px; background: #e4e4e4; border: 1px solid #888; display: flex; align-items: center; justify-content: center; }
.splitter { flex: none; width: 5px; background: linear-gradient(90deg, #fff, #a9c6f0 60%, #dbe8fb); }
.model { flex: 1; position: relative; min-width: 0; }
.legend { position: absolute; left: 3px; top: 4px; color: #f02010; }
.legend p { margin: 0 0 13px; }
.legend div { display: flex; gap: 2px; color: #fff; line-height: 1; }
.legend i { width: 25px; height: 27px; background: #0ff; }
.tiny { font: 4px "Liberation Sans", sans-serif; fill: #3ca060; }
.ratio { font-family: "Liberation Sans", sans-serif; }

.dialog { position: absolute; left: 151px; top: 197px; width: 653px; height: 500px; background: #f0f0f0; border-radius: 8px; color: #111; overflow: hidden; box-shadow: 0 0 0 1px #555; font: 10px/13px "DejaVu Sans Condensed", "DejaVu Sans", sans-serif; }
.title { height: 30px; display: flex; align-items: center; justify-content: space-between; padding: 0 9px; background: #f3f3f3; }
.title h1 { margin: 0; font: 11px/16px "Noto Sans", sans-serif; }
.title button { display: flex; }
.body { display: flex; gap: 12px; padding: 8px 12px 0 10px; }
.main { flex: 1; min-width: 0; }
.top { display: grid; grid-template-columns: 289px 1fr; grid-template-rows: 105px auto; }
.right { grid-row: 1 / span 2; grid-column: 2; }
.row { display: flex; align-items: center; height: 26px; }
.left .row label { flex: 1; }
.left .row { margin-right: 53px; }
.right .row label { width: 145px; }
.cover { margin-right: 6px; }
input[type="text"] { box-sizing: border-box; width: 74px; height: 21px; margin: 0; padding: 0 5px 2px; border: 1px solid #e4e4e4; border-bottom-color: #868686; background: #fff; font: inherit; color: #111; outline: 0; }
input[type="text"]:focus { border-bottom: 2px solid #0067c0; }
input[type="text"]:disabled { background: #f3f3f3; border-color: #e4e4e4; color: #888; }
input::selection { background: #0078d7; color: #fff; }
.unit { margin-left: 4px; }
.checks { grid-column: 1; }
.check { display: flex; align-items: center; gap: 3px; white-space: nowrap; }
.checks .check { height: 25px; padding-left: 1px; }
input[type="checkbox"] { appearance: none; flex: none; position: relative; box-sizing: border-box; width: 13px; height: 13px; margin: 0; border: 1px solid #666; border-radius: 3px; background: #f6f6f6; }
input[type="checkbox"]:checked { background: #0f5fb6; border-color: #0f5fb6; }
input[type="checkbox"]:checked::after { content: ""; position: absolute; left: 3px; top: 2px; width: 5px; height: 3px; border: solid #fff; border-width: 0 0 1px 1px; transform: rotate(-45deg); }
fieldset { margin: 0; padding: 0; border: 1px solid #dcdcdc; min-width: 0; box-sizing: border-box; }
legend { padding: 0 4px; margin-left: 4px; height: 13px; }
.span { margin: 9px 0 0 1px; height: 77px; }
.span .row { padding-left: 10px; height: 26px; }
.span legend + .row { margin-top: 4px; }
.span .row label { width: 267px; }
.span .row span { width: 30px; }
.pair { display: flex; gap: 7px; margin: 10px 0 0 1px; height: 190px; }
.code { flex: none; width: 350px; }
.sketch { float: left; margin: 9px 0 0 9px; }
.hand { font: italic 11px "Liberation Sans", sans-serif; fill: #333; }
.conds { margin: 0 0 0 179px; }
.cond { display: flex; align-items: center; height: 27px; }
.cond .check { width: 47px; }
.cond .small { width: 43px; height: 22px; }
.cond .far { margin-left: 72px; }
.cond span { margin-left: 7px; }
.stirrup { flex: 1; }
.stirrup svg { display: block; margin: 5px 0 0 17px; }
.tall { margin: 33px 0 0 5px; }
.actions { flex: none; width: 73px; display: flex; flex-direction: column; gap: 4px; padding-top: 4px; }
.actions button { height: 22px; border: 1px solid #ccc; border-radius: 4px; background: #fdfdfd; }
.actions .ok { border-color: #0067c0; }

.callout { position: absolute; border: 5px solid #ed1c24; box-sizing: border-box; pointer-events: none; }
.c1 { left: -1px; top: -1px; width: 130px; height: 30px; }
.c2 { left: 931px; top: 23px; width: 73px; height: 83px; }
.c3 { left: 8px; top: 192px; width: 273px; height: 34px; }
</style>
